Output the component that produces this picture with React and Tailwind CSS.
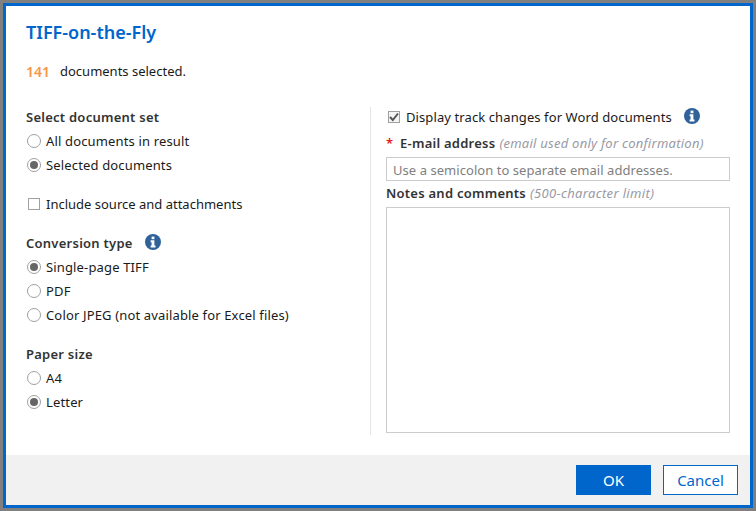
const font = { fontFamily: '"Noto Sans", sans-serif' };

function Radio({ label, checked }) {
  return (
    <div className="flex h-6 items-center gap-[5px] tracking-[0.15px]">
      <span className="flex h-[14px] w-[14px] items-center justify-center rounded-full border border-[#a0a0a0] bg-white">
        {checked && <span className="h-2 w-2 rounded-full bg-[#666666]"></span>}
      </span>
      <span className="mt-[2px]">{label}</span>
    </div>
  );
}

function InfoIcon() {
  return (
    <svg width="16" height="16" viewBox="0 0 16 16">
      <circle cx="8" cy="8" r="8" fill="#2f6299" />
      <rect x="6.6" y="2.6" width="2.8" height="2.6" fill="#fff" />
      <path d="M5.6 6.3h3.8v5.2h1.1v1.9H5.6v-1.9h1v-3.3h-1z" fill="#fff" />
    </svg>
  );
}

function Heading({ children }) {
  return <span className="mt-[2px] font-semibold tracking-[0.25px] text-[#333333]">{children}</span>;
}

export default function App() {
  return (
    <div className="h-[511px] w-[756px] overflow-hidden bg-[#808080] p-[3px]">
      <div className="flex h-full flex-col border-[3px] border-[#0066cc] bg-white text-[13px] text-[#1a1a1a]" style={font}>
        <div className="h-[449px] px-5">
          <h1 className="pt-[14px] text-[18px] leading-6 font-semibold text-[#0066cc]">TIFF-on-the-Fly</h1>
          <div className="mt-[17px] flex h-5 items-center">
            <span className="w-[34px] text-[14px] font-semibold text-[#f79646]">141</span>
            <span className="mt-[2px]">documents selected.</span>
          </div>
          <div className="mt-[26px] flex">
            <div className="h-[328px] w-[345px] border-r border-[#e6e6e6]">
              <div className="flex h-5 items-center"><Heading>Select document set</Heading></div>
              <div className="mt-[2px] pl-px">
                <Radio label="All documents in result" />
                <Radio label="Selected documents" checked />
              </div>
              <div className="mt-[17px] flex h-5 items-center gap-[6px] pl-[2px]">
                <span className="h-3 w-3 border border-[#a0a0a0] bg-white"></span>
                <span className="mt-[2px]">Include source and attachments</span>
              </div>
              <div className="mt-[19px] flex h-5 items-center gap-3">
                <Heading>Conversion type</Heading>
                <span className="-mt-[3px]"><InfoIcon /></span>
              </div>
              <div className="mt-[2px] pl-px">
                <Radio label="Single-page TIFF" checked />
                <Radio label="PDF" />
                <Radio label="Color JPEG (not available for Excel files)" />
              </div>
              <div className="mt-[17px] flex h-5 items-center"><Heading>Paper size</Heading></div>
              <div className="mt-[2px] pl-px">
                <Radio label="A4" />
                <Radio label="Letter" checked />
              </div>
            </div>
            <div className="box-content w-[344px] pl-[15px]">
              <div className="flex h-5 items-center tracking-[0.1px]">
                <span className="ml-[2px] flex h-3 w-3 items-center justify-center border border-[#a0a0a0] bg-[#f4f4f4]">
                  <svg width="10" height="10" viewBox="0 0 10 10">
                    <path d="M1 5l2.8 3L9 1.5" fill="none" stroke="#555555" strokeWidth="2" />
                  </svg>
                </span>
                <span className="mt-[2px] ml-[6px]">Display track changes for Word documents</span>
                <span className="ml-3 -mt-[3px]"><InfoIcon /></span>
              </div>
              <div className="mt-[6px] flex h-5 items-center">
                <span className="mt-[2px] w-[14px] font-semibold text-[#e02020]">*</span>
                <Heading>E-mail address</Heading>
                <span className="mt-[2px] ml-1 tracking-[0.25px] text-[#999aa5] italic">(email used only for confirmation)</span>
              </div>
              <input
                readOnly
                placeholder="Use a semicolon to separate email addresses."
                className="mt-1 block h-6 w-[344px] border border-[#cccccc] px-[6px] pt-[2px] text-[13px] tracking-[0.05px] outline-none placeholder:text-[#808080]"
              />
              <div className="mt-[2px] flex h-5 items-center">
                <Heading>Notes and comments</Heading>
                <span className="mt-[2px] ml-1 tracking-[0.33px] text-[#999aa5] italic">(500-character limit)</span>
              </div>
              <textarea readOnly className="mt-1 block h-[226px] w-[344px] resize-none border border-[#cccccc] outline-none"></textarea>
            </div>
          </div>
        </div>
        <div className="flex flex-1 items-start justify-end gap-3 bg-[#f1f1f1] pt-[10px] pr-[12px]">
          <button className="h-[30px] w-[75px] bg-[#0066cc] text-[15px] text-white">OK</button>
          <button className="h-[30px] w-[75px] border border-[#0066cc] bg-white text-[15px] text-[#0066cc]">Cancel</button>
        </div>
      </div>
    </div>
  );
}
